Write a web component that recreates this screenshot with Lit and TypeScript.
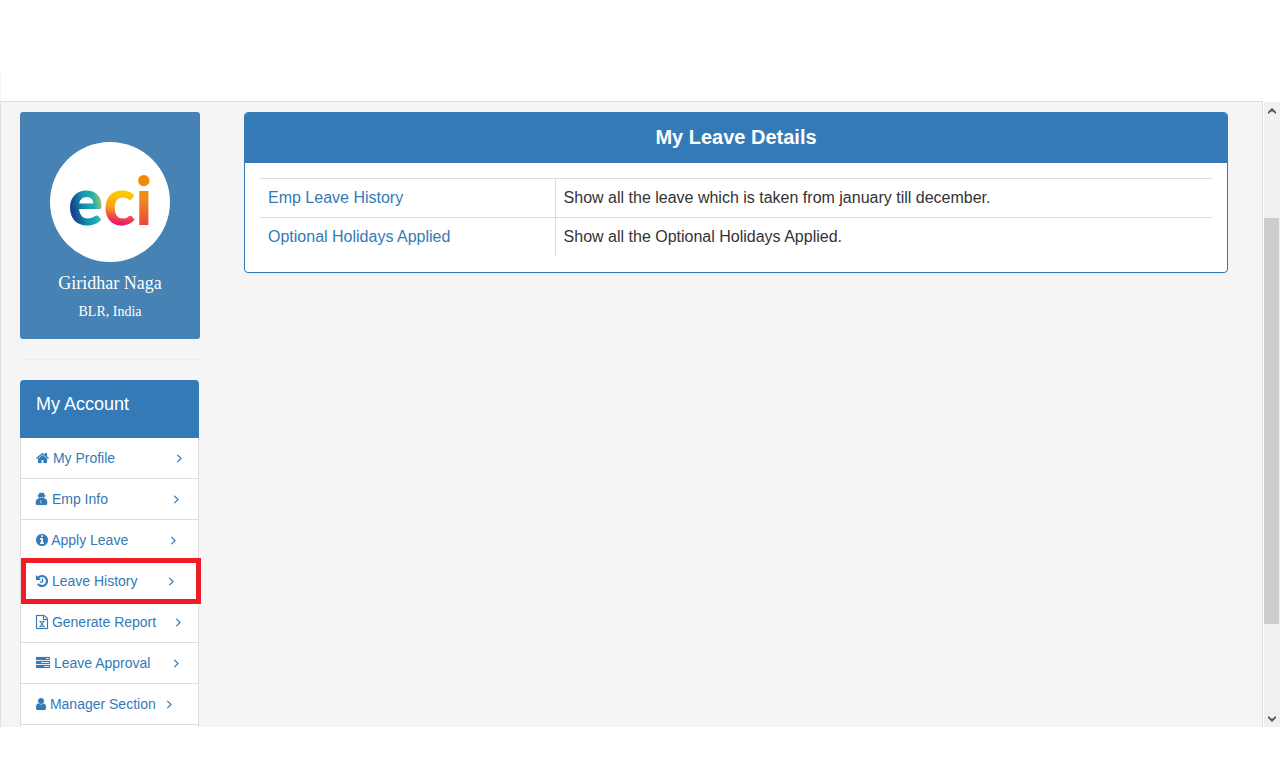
import { LitElement, html, css, svg, nothing } from "lit";
import { customElement, property } from "lit/decorators.js";

interface Glyph {
  left: number;
  width: number;
  path: string;
}

interface MenuItem {
  label: string;
  icon: Glyph;
  pad: number;
  marked?: boolean;
}

const UNIT = 128;

const home: Glyph = {
  left: 64,
  width: 13,
  path: "M1472 992v480q0 26-19 45t-45 19h-384v-384h-256v384h-384q-26 0-45-19t-19-45v-480q0-1 .5-3t.5-3l575-474 575 474q1 2 1 6zm223-69l-62 74q-8 9-21 11h-3q-13 0-21-7l-692-577-692 577q-12 8-24 7-13-2-21-11l-62-74q-8-10-7-23.5t11-21.5l719-599q32-26 76-26t76 26l244 204v-195q0-14 9-23t23-9h192q14 0 23 9t9 23v408l219 182q10 8 11 21.5t-7 23.5z",
};
const agent: Glyph = {
  left: 128,
  width: 12,
  path: "M550 128q80-80 180-20 102 60 204 0 100-60 180 20l90 300h116v160h-130v150l-50 110h180q160 60 190 200l50 260v210q0 146-146 146h-1164q-146 0-146-146v-210l50-260q30-140 190-200h180l-50-110v-150h-130v-160h116zM570 640l20 110h190l52-110zM832 640l52 110h190l20-110zM660 1010l90 480h60v-340zM1004 1010l-90 480h-60v-340z",
};
const info: Glyph = {
  left: 128,
  width: 12,
  path: "M1152 1376v-160q0-14-9-23t-23-9h-96v-512q0-14-9-23t-23-9h-320q-14 0-23 9t-9 23v160q0 14 9 23t23 9h96v320h-96q-14 0-23 9t-9 23v160q0 14 9 23t23 9h448q14 0 23-9t9-23zm-128-896v-160q0-14-9-23t-23-9h-192q-14 0-23 9t-9 23v160q0 14 9 23t23 9h192q14 0 23-9t9-23zm640 416q0 209-103 385.5t-279.5 279.5-385.5 103-385.5-103-279.5-279.5-103-385.5 103-385.5 279.5-279.5 385.5-103 385.5 103 279.5 279.5 103 385.5z",
};
const history: Glyph = {
  left: 128,
  width: 12,
  path: "M1664 896q0 156-61 298t-164 245-245 164-298 61q-172 0-327-72.5t-264-204.5q-7-10-6.5-22.5t8.5-20.5l137-138q10-9 25-9 16 2 23 12 73 95 179 147t225 52q104 0 198.5-40.5t163.5-109.5 109.5-163.5 40.5-198.5-40.5-198.5-109.5-163.5-163.5-109.5-198.5-40.5q-98 0-188 35.5t-160 101.5l137 138q31 30 14 69-17 40-59 40h-448q-26 0-45-19t-19-45v-448q0-42 40-59 39-17 69 14l130 129q107-101 244.5-156.5t284.5-55.5q156 0 298 61t245 164 164 245 61 298zm-640-288v448q0 14-9 23t-23 9h-320q-14 0-23-9t-9-23v-64q0-14 9-23t23-9h224v-352q0-14 9-23t23-9h64q14 0 23 9t9 23z",
};
const sheet: Glyph = {
  left: 128,
  width: 12,
  path: "M1596 380q28 28 48 76t20 88v1152q0 40-28 68t-68 28h-1344q-40 0-68-28t-28-68v-1600q0-40 28-68t68-28h896q40 0 88 20t76 48zm-444-244v376h376q-10-29-22-41l-313-313q-12-12-41-22zm384 1528v-1024h-416q-40 0-68-28t-28-68v-416h-768v1536h1280zm-979-234v106h281v-106h-75l103-161q5-7 10-16.5t7.5-13.5 3.5-4h2q1 4 5 10 2 4 4.5 7.5t6 8 6.5 8.5l107 161h-76v106h291v-106h-68l-192-273 195-282h67v-107h-279v107h74l-103 159q-4 7-10 16.5t-9 13.5l-2 3h-2q-1-4-5-10-6-11-17-23l-106-159h76v-107h-290v107h68l189 272-194 283h-68z",
};
const tasks: Glyph = {
  left: 0,
  width: 14,
  path: "M1024 1408h640v-128h-640v128zm-384-512h1024v-128h-1024v128zm640-512h384v-128h-384v128zm512 832v256q0 26-19 45t-45 19h-1664q-26 0-45-19t-19-45v-256q0-26 19-45t45-19h1664q26 0 45 19t19 45zm0-512v256q0 26-19 45t-45 19h-1664q-26 0-45-19t-19-45v-256q0-26 19-45t45-19h1664q26 0 45 19t19 45zm0-512v256q0 26-19 45t-45 19h-1664q-26 0-45-19t-19-45v-256q0-26 19-45t45-19h1664q26 0 45 19t19 45z",
};
const user: Glyph = {
  left: 256,
  width: 10,
  path: "M1536 1399q0 109-62.5 187t-150.5 78h-854q-88 0-150.5-78t-62.5-187q0-85 8.5-160.5t31.5-152 58.5-131 94-89 134.5-34.5q131 128 313 128t313-128q76 0 134.5 34.5t94 89 58.5 131 31.5 152 8.5 160.5zm-256-887q0 159-112.5 271.5t-271.5 112.5-271.5-112.5-112.5-271.5 112.5-271.5 271.5-112.5 271.5 112.5 112.5 271.5z",
};
const angleRight: Glyph = {
  left: 576,
  width: 5,
  path: "M1171 960q0 13-10 23l-466 466q-10 10-23 10t-23-10l-50-50q-10-10-10-23t10-23l393-393-393-393q-10-10-10-23t10-23l50-50q10-10 23-10t23 10l466 466q10 10 10 23z",
};

const glyph = (g: Glyph) => html`<svg
  class="glyph"
  width=${g.width}
  height="14"
  viewBox="${g.left} 0 ${g.width * UNIT} 1792"
  aria-hidden="true"
>${svg`<path d=${g.path}></path>`}</svg>`;

@customElement("profile-card")
class ProfileCard extends LitElement {
  @property() name = "";
  @property() place = "";

  static styles = css`
    :host {
      display: block;
      padding: 30px 0 16px;
      border-radius: 3px;
      background: #4682b4;
      color: #fff;
      text-align: center;
      font-family: "Liberation Serif", "Times New Roman", serif;
    }
    .avatar {
      display: block;
      margin: 0 auto 8px;
    }
    .mark {
      font-family: Lato, sans-serif;
      font-weight: 900;
      font-size: 66px;
    }
    .name {
      margin: 0;
      font-size: 18px;
      font-weight: 400;
      line-height: 26px;
    }
    .place {
      margin: 4px 0 0;
      font-size: 14px;
      line-height: 23px;
    }
  `;

  render() {
    return html`
      <svg class="avatar" width="120" height="120" viewBox="0 0 120 120" role="img" aria-label="eci">
        <defs>
          <linearGradient id="cool" gradientUnits="userSpaceOnUse" x1="22" y1="62" x2="52" y2="56">
            <stop offset="0" stop-color="#17458f"></stop>
            <stop offset="0.4" stop-color="#0f98ae"></stop>
            <stop offset="0.7" stop-color="#1fb0b0"></stop>
            <stop offset="1" stop-color="#a9c96c"></stop>
          </linearGradient>
          <linearGradient id="warm" gradientUnits="userSpaceOnUse" x1="72" y1="48" x2="68" y2="84">
            <stop offset="0.1" stop-color="#fdc800"></stop>
            <stop offset="0.5" stop-color="#f9a01b"></stop>
            <stop offset="0.75" stop-color="#ee4a45"></stop>
            <stop offset="1" stop-color="#e5097f"></stop>
          </linearGradient>
          <linearGradient id="hot" gradientUnits="userSpaceOnUse" x1="0" y1="34" x2="0" y2="84">
            <stop offset="0" stop-color="#ee8a00"></stop>
            <stop offset="0.45" stop-color="#f08a1c"></stop>
            <stop offset="1" stop-color="#ea4440"></stop>
          </linearGradient>
        </defs>
        <circle cx="60" cy="60" r="60" fill="#fff"></circle>
        <text class="mark" x="18" y="83"><tspan fill="url(#cool)">e</tspan><tspan fill="url(#warm)">c</tspan><tspan fill="url(#hot)">i</tspan></text>
      </svg>
      <h2 class="name">${this.name}</h2>
      <p class="place">${this.place}</p>
    `;
  }
}

@customElement("account-menu")
class AccountMenu extends LitElement {
  @property({ attribute: false }) items: MenuItem[] = [];

  static styles = css`
    :host {
      display: block;
      margin-right: 1px;
      font-size: 14px;
      line-height: 20px;
    }
    .title {
      margin: 0;
      padding: 14px 16px 24px;
      border-radius: 4px 4px 0 0;
      background: #337ab7;
      color: #fff;
      font-size: 18px;
      font-weight: 400;
      line-height: 20px;
    }
    .list {
      margin: 0;
      padding: 0 0 40px;
      list-style: none;
      border: 1px solid #ddd;
      border-top: 0;
      background: #fff;
    }
    .item {
      position: relative;
      border-bottom: 1px solid #ddd;
    }
    .link {
      display: block;
      padding: 10px 15px;
      color: #337ab7;
      text-decoration: none;
      white-space: nowrap;
    }
    .glyph {
      vertical-align: -2px;
      fill: currentColor;
      stroke: currentColor;
      stroke-width: 20px;
      overflow: visible;
    }
    .marker {
      position: absolute;
      inset: -3px -3px -3px 0;
      border: 5px solid #ee1c25;
      z-index: 1;
      pointer-events: none;
    }
  `;

  render() {
    return html`
      <h3 class="title">My Account</h3>
      <ul class="list">
        ${this.items.map(
          (item) => html`<li class="item">
            <a class="link" href="#">${glyph(item.icon)} ${item.label}${"\u00a0".repeat(item.pad)}${glyph(angleRight)}</a>
            ${item.marked ? html`<span class="marker"></span>` : nothing}
          </li>`
        )}
      </ul>
    `;
  }
}

@customElement("leave-panel")
class LeavePanel extends LitElement {
  @property({ attribute: false }) rows: string[][] = [];

  static styles = css`
    :host {
      display: block;
      border: 1px solid #337ab7;
      border-radius: 4px;
      background: #fff;
      box-shadow: 0 1px 1px rgba(0, 0, 0, 0.05);
      overflow: hidden;
    }
    .title {
      margin: 0;
      padding: 12px 15px 14px;
      background: #337ab7;
      color: #fff;
      text-align: center;
      font-size: 20px;
      font-weight: 700;
      line-height: 24px;
    }
    .body {
      padding: 15px 15px 16px;
    }
    .table {
      width: 100%;
      border-collapse: collapse;
      table-layout: fixed;
      font-size: 16px;
      line-height: 22px;
    }
    .cell {
      padding: 8px;
      border-top: 1px solid #ddd;
      color: #333;
      text-align: left;
      font-weight: 400;
    }
    .key {
      width: 31%;
      box-sizing: border-box;
      border-right: 1px solid #ddd;
    }
    .link {
      color: #337ab7;
      text-decoration: none;
    }
  `;

  render() {
    return html`
      <h1 class="title">My Leave Details</h1>
      <div class="body">
        <table class="table">
          <tbody>
            ${this.rows.map(
              ([key, text]) => html`<tr>
                <th class="cell key" scope="row"><a class="link" href="#">${key}</a></th>
                <td class="cell">${text}</td>
              </tr>`
            )}
          </tbody>
        </table>
      </div>
    `;
  }
}

@customElement("app-root")
class AppRoot extends LitElement {
  items: MenuItem[] = [
    { label: "My Profile", icon: home, pad: 16 },
    { label: "Emp Info", icon: agent, pad: 17 },
    { label: "Apply Leave", icon: info, pad: 11 },
    { label: "Leave History", icon: history, pad: 8, marked: true },
    { label: "Generate Report", icon: sheet, pad: 5 },
    { label: "Leave Approval", icon: tasks, pad: 6 },
    { label: "Manager Section", icon: user, pad: 3 },
  ];

  rows = [
    ["Emp Leave History", "Show all the leave which is taken from january till december."],
    ["Optional Holidays Applied", "Show all the Optional Holidays Applied."],
  ];

  static styles = css`
    :host {
      display: grid;
      grid-template-rows: 101px minmax(0, 1fr) 41px;
      height: 100vh;
      background: #fff;
      font-family: "Liberation Sans", Arial, sans-serif;
    }
    .top {
      margin-top: 72px;
      border-left: 1px solid #f7f7f7;
    }
    .frame {
      display: grid;
      grid-template-columns: minmax(0, 1fr) 16px;
      column-gap: 1px;
      min-height: 0;
    }
    .content {
      display: grid;
      grid-template-columns: 180px minmax(0, 1fr);
      column-gap: 44px;
      align-items: start;
      padding: 10px 34px 0 19px;
      border: 1px solid #ddd;
      border-bottom: 0;
      background: #f5f5f5;
      overflow: hidden;
    }
    .rule {
      margin: 20px 0;
      border: 0;
      border-top: 1px solid #eee;
    }
    .scroll {
      display: grid;
      grid-template-rows: 17px 99fr 406fr 86fr 17px;
      margin-top: 1px;
      background: #f0f0f0;
    }
    .step {
      display: grid;
      place-items: center;
      padding: 0;
      border: 0;
      background: none;
      color: #505050;
    }
    .thumb {
      grid-row: 3;
      margin-right: 1px;
      background: #cdcdcd;
    }
    .down {
      grid-row: 5;
    }
  `;

  render() {
    return html`
      <header class="top"></header>
      <div class="frame">
        <main class="content">
          <aside>
            <profile-card name="Giridhar Naga" place="BLR, India"></profile-card>
            <hr class="rule" />
            <account-menu .items=${this.items}></account-menu>
          </aside>
          <leave-panel .rows=${this.rows}></leave-panel>
        </main>
        <div class="scroll">
          <button class="step" aria-label="Scroll up">
            <svg width="8" height="6" viewBox="0 0 8 6"><path d="M0 6V4L4 0l4 4v2L4 3z" fill="currentColor"></path></svg>
          </button>
          <div class="thumb"></div>
          <button class="step down" aria-label="Scroll down">
            <svg width="8" height="6" viewBox="0 0 8 6"><path d="M0 0v2l4 4 4-4V0L4 3z" fill="currentColor"></path></svg>
          </button>
        </div>
      </div>
      <footer></footer>
    `;
  }
}
